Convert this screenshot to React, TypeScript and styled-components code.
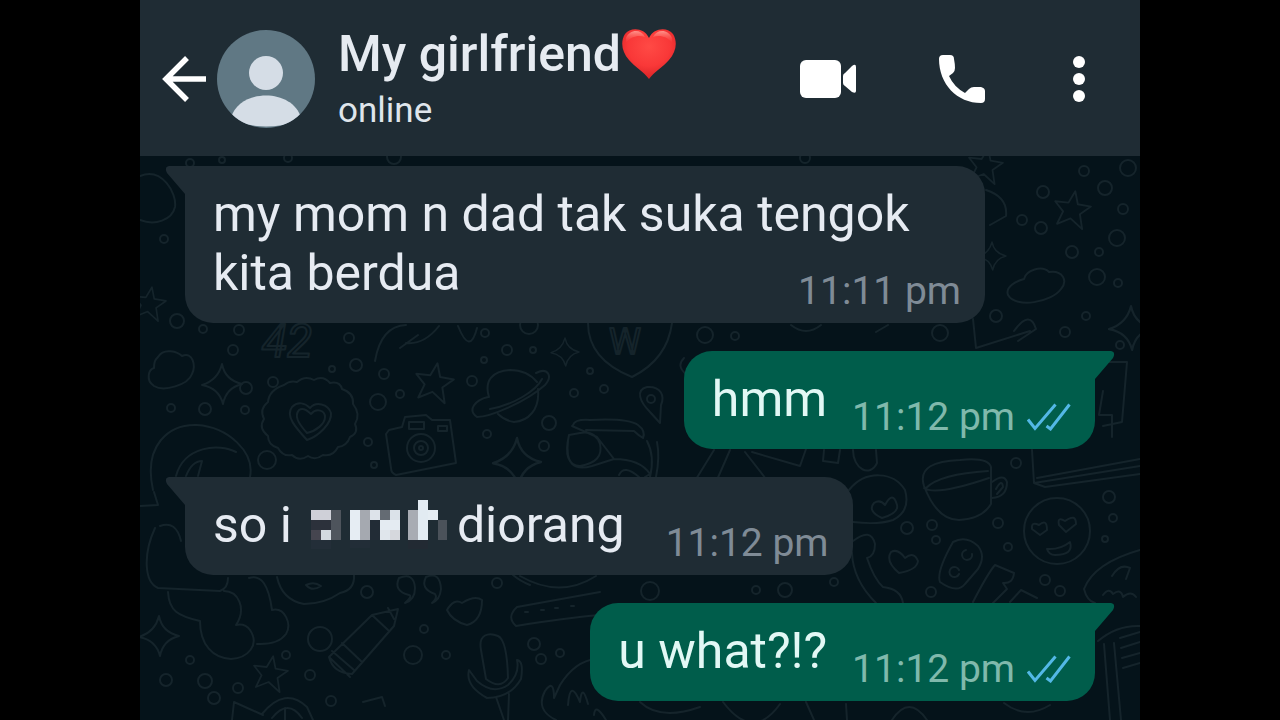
import React from "react";
import styled, { createGlobalStyle, css } from "styled-components";

const GlobalStyle = createGlobalStyle`
  *, *::before, *::after { box-sizing: border-box; }
  body { margin: 0; background: #000; font-family: Roboto, "Liberation Sans", sans-serif; }
`;

const Screen = styled.div`
  display: flex;
  flex-direction: column;
  max-width: 1000px;
  min-height: 100vh;
  margin: 0 auto;
  background: #05131a;
`;

const Header = styled.header`
  display: flex;
  align-items: center;
  padding: 25px 49px 24px 22px;
  background: #1f2c34;
  color: #fff;
`;

const IconButton = styled.button<{ $width: number }>`
  display: flex;
  justify-content: center;
  align-items: center;
  width: ${(p) => p.$width}px;
  height: 48px;
  padding: 0;
  border: 0;
  background: none;
  color: inherit;
  cursor: pointer;

  svg { flex: none; }
`;

const Avatar = styled.svg`
  flex: none;
  width: 98px;
  height: 98px;
  margin: 0 23px 0 11px;
`;

const Contact = styled.div`
  flex: 1;
  min-width: 0;
`;

const Name = styled.h1`
  display: flex;
  align-items: center;
  margin: 0;
  color: #e6ebf1;
  font-size: 50px;
  font-weight: 500;
  line-height: 58px;
`;

const Status = styled.p`
  margin: 7px 0 0;
  color: #dfe5eb;
  font-size: 35px;
  line-height: 42px;
`;

const Actions = styled.div`
  display: flex;
  gap: 81px;
`;

const Chat = styled.main`
  position: relative;
  flex: 1;
  overflow: hidden;
`;

const Wallpaper = styled.svg`
  position: absolute;
  inset: 0;
  width: 100%;
  height: 100%;
  fill: none;
  stroke: #15242b;
  stroke-width: 2;
  stroke-linecap: round;
  stroke-linejoin: round;
`;

const Messages = styled.ul`
  position: relative;
  display: flex;
  flex-direction: column;
  align-items: flex-start;
  gap: 28px;
  margin: 0;
  padding: 10px 45px 19px;
  list-style: none;
`;

const incoming = css`
  border-radius: 0 28px 28px 28px;
  background: #1f2c34;
  color: #e6ebf2;
  --meta: #7f8b96;
`;

const outgoing = css`
  align-self: flex-end;
  border-radius: 28px 0 28px 28px;
  background: #005d4b;
  color: #e2f8f5;
  --meta: #80b9ac;
`;

const Bubble = styled.li<{ $mine?: boolean }>`
  position: relative;
  max-width: 800px;
  padding: 19px 24px 9px 28px;
  font-size: 50px;
  line-height: 59px;
  ${(p) => (p.$mine ? outgoing : incoming)}
`;

const Tail = styled.svg<{ $mine?: boolean }>`
  position: absolute;
  top: 0;
  width: 21px;
  height: 30px;
  ${(p) => (p.$mine ? "right: -20px; fill: #005d4b;" : "left: -20px; fill: #1f2c34; transform: scaleX(-1);")}
`;

const Meta = styled.span<{ $gap: number }>`
  float: right;
  display: flex;
  align-items: center;
  gap: 12px;
  margin: 24px 0 0 ${(p) => p.$gap}px;
  color: var(--meta);
  font-size: 39px;
  line-height: 46px;
`;

const Redacted = styled.svg`
  width: 136px;
  height: 50px;
  margin: 0 10px 0 19px;
  vertical-align: -8px;
`;

const Ticks = () => (
  <svg width="44" height="28" viewBox="0 0 44 28" fill="none" stroke="#53b8e6" strokeWidth="3" role="img" aria-label="Read">
    <path d="M1 16.500L8 25.500L28.500 1.500M19.500 23L23.500 26L42.500 1.500" />
  </svg>
);

type MessageProps = { mine?: boolean; time: string; gap?: number; children: React.ReactNode };

const Message = ({ mine, time, gap = 25, children }: MessageProps) => (
  <Bubble $mine={mine}>
    <Tail $mine={mine} viewBox="0 0 21 30" aria-hidden="true">
      <path d="M0 0H17Q22 1 19 7L1 28V30H0Z" />
    </Tail>
    {children}
    <Meta $gap={gap}>
      <time>{time}</time>
      {mine && <Ticks />}
    </Meta>
  </Bubble>
);

/* x, y, width, height, colour of each mosaic block */
const blocks: [number, number, number, number, string][] = [
  [0, 10, 20, 10, "#cfd0d8"], [20, 10, 10, 20, "#4e545c"], [0, 20, 20, 10, "#2c313b"],
  [0, 30, 10, 10, "#45454f"], [10, 30, 10, 10, "#d3d9e0"], [20, 30, 10, 10, "#50565e"],
  [0, 40, 20, 9, "#232e38"], [39, 10, 10, 30, "#e6edf3"], [49, 10, 10, 30, "#a5a9b0"],
  [59, 10, 10, 10, "#dde3ea"], [69, 10, 10, 10, "#646b73"], [79, 10, 10, 10, "#dbe2e9"],
  [59, 20, 10, 20, "#222c36"], [69, 20, 20, 10, "#e4ebf2"], [69, 30, 10, 10, "#e0e6ec"],
  [79, 30, 10, 10, "#d6d8dd"], [39, 40, 20, 8, "#222d37"], [97, 10, 10, 30, "#a8acb3"],
  [107, 0, 10, 40, "#e2ebf2"], [117, 10, 10, 10, "#e5edf3"], [127, 20, 9, 20, "#4b525a"],
  [97, 40, 20, 9, "#222a33"],
];

const Mosaic = () => (
  <Redacted viewBox="0 0 136 50" role="img" aria-label="censored word" shapeRendering="crispEdges">
    {blocks.map(([x, y, w, h, fill]) => (
      <rect key={`${x}-${y}`} x={x} y={y} width={w} height={h} fill={fill} />
    ))}
  </Redacted>
);

const Heart = () => (
  <svg width="56" height="52" viewBox="0 0 56 52" role="img" aria-label="red heart">
    <defs>
      <radialGradient id="heart" cx="50%" cy="35%" r="65%">
        <stop offset="0" stopColor="#ff4a45" />
        <stop offset="0.6" stopColor="#f93838" />
        <stop offset="1" stopColor="#d92326" />
      </radialGradient>
      <linearGradient id="shine" x1="0" y1="0" x2="0" y2="1">
        <stop offset="0" stopColor="#ff9b93" stopOpacity="0.9" />
        <stop offset="1" stopColor="#ff5a52" stopOpacity="0" />
      </linearGradient>
    </defs>
    <path d="M28 10C23-1 9-1 4 6C-1 14 1 24 8 32C14 39 23 44 28 51C33 44 42 39 48 32C55 24 57 14 52 6C47-1 33-1 28 10Z" fill="url(#heart)" />
    <path d="M5 10C9 1 20 1 24 9C18 7 10 8 5 15ZM32 9C36 1 47 1 51 10V15C46 8 38 7 32 9Z" fill="url(#shine)" />
  </svg>
);

/* centre x, centre y, radius of the small rings scattered over the wallpaper */
const rings: number[][] = [
  [164, 239, 4], [177, 321, 7], [203, 329, 4], [239, 330, 5], [233, 350, 5], [246, 388, 6], [273, 382, 5],
  [171, 408, 4], [205, 409, 6], [245, 410, 4], [267, 460, 9], [349, 338, 5], [356, 365, 6], [332, 369, 3],
  [384, 374, 5], [378, 402, 8], [400, 394, 4], [368, 442, 4], [374, 465, 3], [472, 381, 5], [507, 350, 5],
  [485, 333, 4], [533, 350, 3], [484, 360, 3], [590, 371, 3], [574, 393, 4], [604, 389, 4], [549, 423, 7],
  [487, 434, 4], [544, 446, 5], [705, 335, 8], [735, 336, 4], [529, 325, 9], [940, 333, 8], [1043, 192, 6],
  [1084, 171, 5], [1128, 168, 8], [1105, 188, 7], [1123, 209, 5], [1022, 220, 5], [1041, 228, 6],
  [1117, 238, 8], [1072, 252, 6], [1099, 252, 4], [1097, 277, 8], [1118, 283, 4], [996, 316, 6],
  [1086, 316, 4], [1065, 332, 5], [1016, 463, 5], [1109, 497, 6], [1113, 518, 4], [1105, 539, 3],
  [907, 528, 6], [932, 525, 5], [998, 523, 5], [936, 540, 4], [1008, 547, 4], [1045, 580, 5],
  [1060, 591, 5], [931, 592, 5], [756, 590, 4], [785, 590, 7], [834, 582, 4], [650, 591, 9],
  [367, 592, 6], [497, 583, 5], [320, 639, 12], [424, 629, 4], [413, 655, 9], [446, 655, 4],
  [310, 675, 5], [331, 701, 5], [286, 655, 4], [190, 660, 4], [166, 680, 6], [205, 681, 7],
  [214, 698, 6], [238, 688, 5], [534, 644, 6], [541, 659, 5], [560, 653, 4], [1120, 345, 4],
  [190, 163, 4], [222, 160, 3], [288, 158, 4], [394, 157, 7], [805, 158, 5],
];

const sparkles: number[][] = [
  [565, 352, 14], [517, 462, 24], [1131, 328, 22], [159, 636, 20], [222, 384, 20], [992, 256, 14],
];

const stars: number[][] = [[434, 383, 20], [1072, 210, 19], [149, 304, 17], [270, 674, 18], [985, 166, 18]];

const Doodles = () => (
  <Wallpaper viewBox="140 156 1000 564" preserveAspectRatio="xMidYMin slice" aria-hidden="true">
    {rings.map(([x, y, r]) => <circle key={`${x}-${y}`} cx={x} cy={y} r={r} />)}
    {sparkles.map(([x, y, s]) => (
      <path key={`${x}-${y}`} transform={`translate(${x} ${y}) scale(${s / 20})`} d="M0-20Q3-4 20 0Q4 4 1 20Q-3 4-20 1Q-4-4 0-20Z" />
    ))}
    {stars.map(([x, y, s]) => (
      <path key={`${x}-${y}`} transform={`translate(${x} ${y}) rotate(10) scale(${s / 20})`} d="M0-20L5-7L19-7L9 3L14 18L0 9L-13 17L-9 3L-19-6L-5-7Z" />
    ))}
    {/* clouds and planet */}
    <path d="M158 357C164 347 178 352 182 356C193 351 196 366 192 374C188 385 164 392 154 386C145 380 149 369 154 368C154 362 155 360 158 357Z" />
    <path d="M140 176C162 167 177 193 175 207C172 220 155 226 140 220" />
    <path d="M1024 279C1026 270 1042 265 1049 272C1063 270 1068 281 1061 289C1052 302 1016 309 1008 295C1005 287 1016 281 1024 279Z" />
    <path d="M489 397C484 381 492 371 510 370C523 370 532 376 537 382M538 389C540 410 528 421 514 422C507 421 502 418 498 414M536 373C548 367 553 376 545 385C526 402 490 417 477 417C467 410 475 400 488 397M490 409C513 405 536 391 542 379" />
    {/* flower badge with a heart */}
    <path d="M284 385q6-5 13-3q8-7 17-2q9-5 16 3q10-2 12 6q12 4 11 15q8 10 2 20q4 9-5 13q-3 9-12 10q-5 10-15 8q-8 6-15 1q-9 6-16-1q-9 2-14-7q-10-3-10-12q-10-8-4-17q-5-10 4-17q1-12 16-17Z" />
    <path d="M307 440C296 428 285 416 292 407C298 401 305 403 310 408C316 401 328 404 331 413C332 423 319 436 307 440ZM307 433C298 423 294 416 299 410C303 407 307 410 311 414C317 407 325 411 325 417C325 424 316 431 307 433Z" />
    {/* camera */}
    <path d="M389 430L402 427L405 417L426 415L432 420L450 420L456 463L396 475Q391 473 391 468L386 434ZM409 422H424V429H409ZM438 426H447V431H438Z" />
    <circle cx="421" cy="448" r="14" /><circle cx="421" cy="448" r="7" /><circle cx="421" cy="448" r="2" />
    {/* shield and sunglasses */}
    <path d="M588 323C588 347 602 365 632 377C656 365 669 346 672 323" />
    <path d="M650 412C640 402 635 390 647 387C661 386 665 396 661 405L660 423ZM647 399a4 4 0 1 0 8 0a4 4 0 1 0-8 0M573 425Q575 419 590 420Q628 418 638 425Q646 431 643 438Q638 435 634 431L586 430M572 426L597 437L614 459Q640 459 650 474L645 477M569 435Q562 465 580 466Q604 462 600 444Q595 430 580 433ZM568 441Q564 474 592 466L614 459M619 475Q624 464 639 477M647 441Q655 456 650 477M657 442Q660 457 656 477" />
    {/* sleeping moon, left edge */}
    <path d="M153 490C143 445 169 424 197 425C228 427 255 452 250 477M176 476C184 446 219 443 236 452M186 476Q192 461 202 461L198 476M140 506L158 505L154 492M155 528C143 554 144 582 158 588L220 591Q228 588 228 578M160 526Q176 520 181 541M168 592C169 611 178 616 200 621C200 645 213 658 231 659C248 658 260 645 250 630Q245 623 236 625C247 608 238 591 224 591M249 578Q267 572 272 610C285 607 292 624 286 634Q278 645 257 644" />
    {/* cup, paper and smiley */}
    <path d="M924 486C918 467 935 461 960 460Q988 457 991 467L991 504Q982 519 959 520Q937 520 924 486ZM926 488Q940 474 988 471M992 482Q1004 473 1007 482Q1007 497 992 498M996 489Q1002 478 1003 487L997 494M924 488Q936 496 989 478" />
    <path d="M1032 450L1034 483L1140 466M1037 478L1140 459M1034 483L1045 487L1140 474M690 489L714 450M713 489L730 450M745 452L773 488M752 452L800 466L806 449M824 450L823 461L838 463L840 450M853 450C853 469 870 478 877 463L876 450" />
    <circle cx="1057" cy="531" r="33" />
    <path d="M1032 529Q1031 521 1039 525Q1047 518 1047 530L1040 535ZM1059 525Q1057 516 1065 521Q1076 513 1076 524L1066 532ZM1047 549Q1060 550 1070 542Q1074 555 1055 555Q1049 555 1047 549Z" />
    {/* heart badge, phone and game pad */}
    <path d="M849 490C866 469 894 472 905 490Q911 511 893 520Q878 525 853 522M882 518Q867 511 874 503Q880 499 885 505Q893 490 897 505Q899 513 882 518ZM853 541Q871 527 875 544Q875 556 867 558Q874 579 883 587Q901 589 903 603M852 553Q853 580 876 603M899 573Q885 561 891 552Q898 548 905 558Q914 551 918 561Q917 570 899 573ZM940 582Q936 572 953 542Q966 535 978 546Q986 556 978 569L965 584Q957 594 940 582ZM959 570a5 5 0 1 0 0 4M966 550a5 5 0 1 0 6 4" />
    <path d="M973 602Q988 573 995 565L1014 573Q1013 584 1003 583L1007 589L993 603M1010 602L1021 590L1037 598M1084 589Q1094 563 1140 550M1084 589Q1087 601 1095 603M1112 576Q1120 563 1130 568L1126 579M1103 595q6-8 10-1q8-6 10 3q8-7 13 0M1103 362H1127L1122 422L1103 426M1103 391L1099 415H1112V437" />
    {/* ornament, quotes, crayon and strap */}
    <path d="M277 577Q282 600 304 604Q324 604 340 593Q355 590 354 575M306 585Q314 581 321 586Q312 592 306 585ZM405 603Q413 596 409 595Q393 591 399 578Q414 572 415 588Q415 600 405 603ZM432 603Q438 598 435 594Q420 589 426 577Q440 571 441 589Q440 600 432 603ZM372 615L398 609L394 626L352 674Q333 673 329 657ZM372 615L388 630M342 643L362 662M332 651L354 670M329 657L350 677M388 608L394 619" />
    <path d="M447 610Q454 598 462 603Q475 595 482 600Q482 621 467 625Q452 621 447 610ZM600 592L517 607Q506 617 516 626Q565 618 600 615M520 576Q560 599 596 576M513 575Q520 581 530 585M525 612h3M541 610h3M555 608h3M571 606h3" />
    {/* microphone */}
    <path d="M481 650C478 634 489 632 498 636Q507 640 508 678Q500 690 486 679ZM469 670Q465 686 487 698Q510 698 521 679Q524 661 517 660Q520 674 508 685Q493 695 477 681ZM496 697L504 720M509 694L508 720" />
    {/* bottom edge */}
    <path d="M232 720L234 702L263 715M262 714Q285 686 307 707L313 720M272 718Q288 698 302 718M285 708V720M363 702L382 697L385 706M556 720Q535 710 545 691Q554 678 554 698L560 685Q575 661 596 659M568 705Q570 678 580 702Q582 682 588 704M594 715Q595 702 606 720M640 702Q660 721 700 707M723 702Q753 742 780 704M806 702L814 720M846 704L847 720M892 720Q909 694 927 720M1004 703Q1026 720 1050 705M1098 641Q1117 625 1140 626M1104 644L1110 720M1114 643L1121 720M1120 638L1140 632M1121 648L1140 642M1122 658L1140 653M1123 668L1140 663" />
    <path d="M375 361Q381 326 406 325M406 343Q424 345 439 326M400 348L418 335M458 326Q470 356 477 328M686 374Q676 366 684 358M791 325Q806 337 821 325M876 332L888 325M973 319L976 348L1030 331M1014 331Q1030 309 1036 329L1018 341M986 190Q1008 197 1006 216L990 225" />
    <text x="262" y="357" fontFamily="Roboto" fontWeight="400" fontSize="46" fontStyle="italic">42</text>
    <text x="609" y="354" fontFamily="Roboto" fontWeight="400" fontSize="36">W</text>
  </Wallpaper>
);

export default function App() {
  return (
    <>
      <GlobalStyle />
      <Screen>
        <Header>
          <IconButton $width={44} type="button" aria-label="Back">
            <svg width="44" height="46" viewBox="0 0 44 46" fill="none" stroke="currentColor" strokeWidth="5.500">
              <path d="M25 2L4 23L25 44M4 23H44" />
            </svg>
          </IconButton>
          <Avatar viewBox="0 0 98 98" role="img" aria-label="Contact photo">
            <clipPath id="disc"><circle cx="49" cy="49" r="49" /></clipPath>
            <g clipPath="url(#disc)">
              <rect width="98" height="98" fill="#607884" />
              <circle cx="49" cy="43" r="17" fill="#d5dde6" />
              <path d="M14 88C22 58 76 58 84 88L80 91Q49 102 18 91Z" fill="#d5dde6" />
            </g>
          </Avatar>
          <Contact>
            <Name>My girlfriend<Heart /></Name>
            <Status>online</Status>
          </Contact>
          <Actions>
            <IconButton $width={58} type="button" aria-label="Video call">
              <svg width="58" height="38" viewBox="0 0 58 38" fill="currentColor">
                <rect x="1" y="0" width="41" height="38" rx="6" />
                <path d="M44 16Q44 14 46 13L53 6Q57 3 57 7V31Q57 34 53 32L46 26Q44 25 44 23Z" />
              </svg>
            </IconButton>
            <IconButton $width={48} type="button" aria-label="Voice call">
              <svg width="48" height="48" viewBox="0 0 48 48" fill="currentColor">
                <path d="M1 4Q1 0 5 0H12Q16 0 16 4Q17 9 17 13Q17 16 15 18L11 21Q16 32 27 38L31 34Q33 32 36 32H43Q47 33 47 36V44Q47 48 43 48C19 48 1 29 1 4Z" />
              </svg>
            </IconButton>
            <IconButton $width={24} type="button" aria-label="More options">
              <svg width="12" height="46" viewBox="0 0 12 46" fill="currentColor">
                <circle cx="6" cy="6" r="6" /><circle cx="6" cy="23" r="6" /><circle cx="6" cy="40" r="6" />
              </svg>
            </IconButton>
          </Actions>
        </Header>
        <Chat>
          <Doodles />
          <Messages>
            <Message time="11:11 pm">my mom n dad tak suka tengok kita berdua</Message>
            <Message mine time="11:12 pm">hmm</Message>
            <Message time="11:12 pm" gap={41}>so i<Mosaic />diorang</Message>
            <Message mine time="11:12 pm">u what?!?</Message>
          </Messages>
        </Chat>
      </Screen>
    </>
  );
}
